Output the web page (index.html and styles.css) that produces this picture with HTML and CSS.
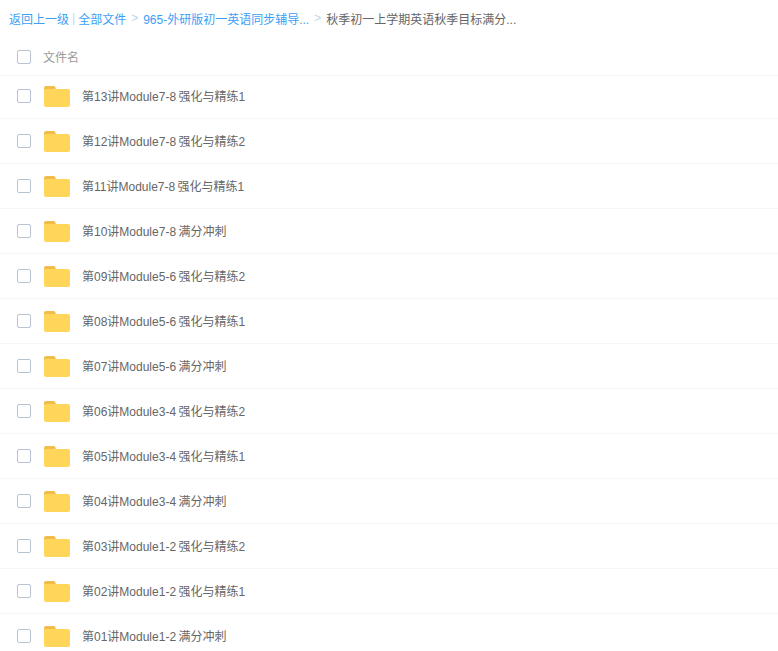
FILE: index.html
```html
<!DOCTYPE html>
<html lang="zh">
<head>
<meta charset="utf-8">
<title>文件列表</title>
<link rel="stylesheet" href="styles.css">
</head>
<body>
<nav class="crumbs">
  <a class="link">返回上一级</a><span class="bar">|</span><a class="link">全部文件</a><span class="gt">&gt;</span><a class="link">965-外研版初一英语同步辅导...</a><span class="gt">&gt;</span><span class="current">秋季初一上学期英语秋季目标满分...</span>
</nav>
<div class="head"><i class="check"></i><span class="head-label">文件名</span></div>
<ul class="list">
  <li class="row first"><i class="check"></i><svg class="folder" viewBox="0 0 26 21"><path d="M0 2a2 2 0 0 1 2-2h7.500a2 2 0 0 1 2 1.500L12 4H0z" fill="#f0bd4a"/><rect y="3" width="26" height="18" rx="2" fill="#ffd659"/></svg><span class="name">第13讲Module7-8 强化与精练1</span></li>
  <li class="row"><i class="check"></i><svg class="folder" viewBox="0 0 26 21"><path d="M0 2a2 2 0 0 1 2-2h7.500a2 2 0 0 1 2 1.500L12 4H0z" fill="#f0bd4a"/><rect y="3" width="26" height="18" rx="2" fill="#ffd659"/></svg><span class="name">第12讲Module7-8 强化与精练2</span></li>
  <li class="row"><i class="check"></i><svg class="folder" viewBox="0 0 26 21"><path d="M0 2a2 2 0 0 1 2-2h7.500a2 2 0 0 1 2 1.500L12 4H0z" fill="#f0bd4a"/><rect y="3" width="26" height="18" rx="2" fill="#ffd659"/></svg><span class="name">第11讲Module7-8 强化与精练1</span></li>
  <li class="row"><i class="check"></i><svg class="folder" viewBox="0 0 26 21"><path d="M0 2a2 2 0 0 1 2-2h7.500a2 2 0 0 1 2 1.500L12 4H0z" fill="#f0bd4a"/><rect y="3" width="26" height="18" rx="2" fill="#ffd659"/></svg><span class="name">第10讲Module7-8 满分冲刺</span></li>
  <li class="row"><i class="check"></i><svg class="folder" viewBox="0 0 26 21"><path d="M0 2a2 2 0 0 1 2-2h7.500a2 2 0 0 1 2 1.500L12 4H0z" fill="#f0bd4a"/><rect y="3" width="26" height="18" rx="2" fill="#ffd659"/></svg><span class="name">第09讲Module5-6 强化与精练2</span></li>
  <li class="row"><i class="check"></i><svg class="folder" viewBox="0 0 26 21"><path d="M0 2a2 2 0 0 1 2-2h7.500a2 2 0 0 1 2 1.500L12 4H0z" fill="#f0bd4a"/><rect y="3" width="26" height="18" rx="2" fill="#ffd659"/></svg><span class="name">第08讲Module5-6 强化与精练1</span></li>
  <li class="row"><i class="check"></i><svg class="folder" viewBox="0 0 26 21"><path d="M0 2a2 2 0 0 1 2-2h7.500a2 2 0 0 1 2 1.500L12 4H0z" fill="#f0bd4a"/><rect y="3" width="26" height="18" rx="2" fill="#ffd659"/></svg><span class="name">第07讲Module5-6 满分冲刺</span></li>
  <li class="row"><i class="check"></i><svg class="folder" viewBox="0 0 26 21"><path d="M0 2a2 2 0 0 1 2-2h7.500a2 2 0 0 1 2 1.500L12 4H0z" fill="#f0bd4a"/><rect y="3" width="26" height="18" rx="2" fill="#ffd659"/></svg><span class="name">第06讲Module3-4 强化与精练2</span></li>
  <li class="row"><i class="check"></i><svg class="folder" viewBox="0 0 26 21"><path d="M0 2a2 2 0 0 1 2-2h7.500a2 2 0 0 1 2 1.500L12 4H0z" fill="#f0bd4a"/><rect y="3" width="26" height="18" rx="2" fill="#ffd659"/></svg><span class="name">第05讲Module3-4 强化与精练1</span></li>
  <li class="row"><i class="check"></i><svg class="folder" viewBox="0 0 26 21"><path d="M0 2a2 2 0 0 1 2-2h7.500a2 2 0 0 1 2 1.500L12 4H0z" fill="#f0bd4a"/><rect y="3" width="26" height="18" rx="2" fill="#ffd659"/></svg><span class="name">第04讲Module3-4 满分冲刺</span></li>
  <li class="row"><i class="check"></i><svg class="folder" viewBox="0 0 26 21"><path d="M0 2a2 2 0 0 1 2-2h7.500a2 2 0 0 1 2 1.500L12 4H0z" fill="#f0bd4a"/><rect y="3" width="26" height="18" rx="2" fill="#ffd659"/></svg><span class="name">第03讲Module1-2 强化与精练2</span></li>
  <li class="row"><i class="check"></i><svg class="folder" viewBox="0 0 26 21"><path d="M0 2a2 2 0 0 1 2-2h7.500a2 2 0 0 1 2 1.500L12 4H0z" fill="#f0bd4a"/><rect y="3" width="26" height="18" rx="2" fill="#ffd659"/></svg><span class="name">第02讲Module1-2 强化与精练1</span></li>
  <li class="row"><i class="check"></i><svg class="folder" viewBox="0 0 26 21"><path d="M0 2a2 2 0 0 1 2-2h7.500a2 2 0 0 1 2 1.500L12 4H0z" fill="#f0bd4a"/><rect y="3" width="26" height="18" rx="2" fill="#ffd659"/></svg><span class="name">第01讲Module1-2 满分冲刺</span></li>
</ul>
</body>
</html>
```

FILE: styles.css
```css
html, body {
  margin: 0;
  padding: 0;
  height: 651px;
  overflow: hidden;
  background: #fff;
  font-family: "Liberation Sans", "Noto Sans CJK SC", sans-serif;
  font-size: 12px;
  color: #666;
}
.crumbs {
  display: flex;
  align-items: center;
  box-sizing: border-box;
  height: 38px;
  padding-left: 9px;
  padding-bottom: 2px;
  white-space: nowrap;
}
.link { color: #3b9ff5; }
.bar { color: #b8d9f5; margin: 0 3px; }
.gt { color: #bdd4ec; margin: 0 5px; }
.current { color: #666; }
.head {
  display: flex;
  align-items: center;
  height: 37px;
  padding-left: 17px;
  border-bottom: 1px solid #f4f7fb;
}
.head-label { margin-left: 12px; color: #999; }
.check {
  flex: none;
  box-sizing: border-box;
  width: 14px;
  height: 14px;
  border: 1px solid #b9c4d3;
  border-radius: 2px;
  background: #fff;
}
.list { list-style: none; margin: 0; padding: 0; }
.row {
  display: flex;
  align-items: center;
  box-sizing: border-box;
  height: 45px;
  padding-left: 17px;
  border-bottom: 1px solid #f4f7fb;
}
.row.first { height: 43px; padding-bottom: 2px; }
.folder { flex: none; width: 26px; height: 21px; margin-left: 13px; }
.name { margin-left: 12px; margin-bottom: 1px; color: #666; word-spacing: -1px; }
```
